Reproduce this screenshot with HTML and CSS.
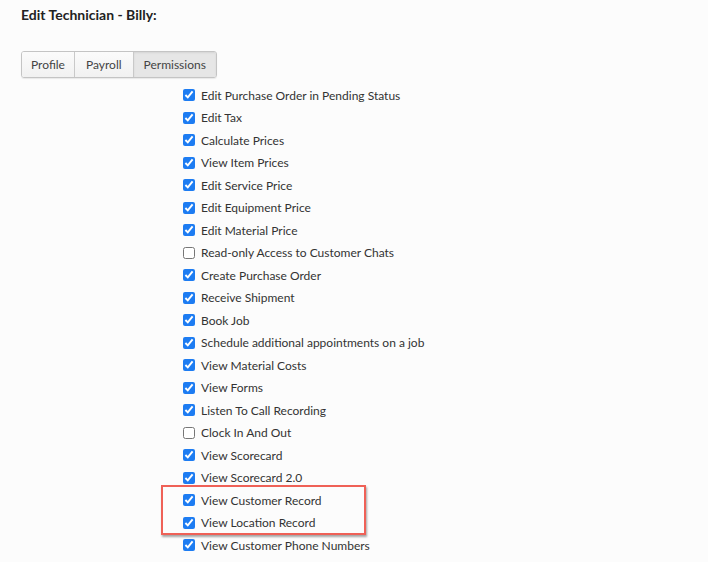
FILE: index.html
```html
<!DOCTYPE html>
<html lang="en">
<head>
<meta charset="utf-8">
<title>Edit Technician - Billy</title>
<link rel="stylesheet" href="styles.css">
</head>
<body>
<div class="page">
  <h1 class="title">Edit Technician - Billy:</h1>
  <div class="tabs">
    <button class="tab">Profile</button>
    <button class="tab">Payroll</button>
    <button class="tab active">Permissions</button>
  </div>
  <div class="perms">
    <label class="row"><input type="checkbox" checked><span>Edit Purchase Order in Pending Status</span></label>
    <label class="row"><input type="checkbox" checked><span>Edit Tax</span></label>
    <label class="row"><input type="checkbox" checked><span>Calculate Prices</span></label>
    <label class="row"><input type="checkbox" checked><span>View Item Prices</span></label>
    <label class="row"><input type="checkbox" checked><span>Edit Service Price</span></label>
    <label class="row"><input type="checkbox" checked><span>Edit Equipment Price</span></label>
    <label class="row"><input type="checkbox" checked><span>Edit Material Price</span></label>
    <label class="row"><input type="checkbox"><span>Read-only Access to Customer Chats</span></label>
    <label class="row"><input type="checkbox" checked><span>Create Purchase Order</span></label>
    <label class="row"><input type="checkbox" checked><span>Receive Shipment</span></label>
    <label class="row"><input type="checkbox" checked><span>Book Job</span></label>
    <label class="row"><input type="checkbox" checked><span>Schedule additional appointments on a job</span></label>
    <label class="row"><input type="checkbox" checked><span>View Material Costs</span></label>
    <label class="row"><input type="checkbox" checked><span>View Forms</span></label>
    <label class="row"><input type="checkbox" checked><span>Listen To Call Recording</span></label>
    <label class="row"><input type="checkbox"><span>Clock In And Out</span></label>
    <label class="row"><input type="checkbox" checked><span>View Scorecard</span></label>
    <label class="row"><input type="checkbox" checked><span>View Scorecard 2.0</span></label>
    <label class="row"><input type="checkbox" checked><span>View Customer Record</span></label>
    <label class="row"><input type="checkbox" checked><span>View Location Record</span></label>
    <label class="row"><input type="checkbox" checked><span>View Customer Phone Numbers</span></label>
    <div class="highlight"></div>
  </div>
</div>
</body>
</html>
```
FILE: styles.css
```css
html, body {
  margin: 0;
  padding: 0;
  background: #fcfcfc;
}
body {
  font-family: Lato, "Open Sans", "Liberation Sans", sans-serif;
  color: #333;
  height: 562px;
  overflow: hidden;
}
.page {
  padding: 6px 0 0 21px;
}
.title {
  margin: 0;
  font-size: 14px;
  line-height: 18px;
  font-weight: 700;
  color: #222;
}
.tabs {
  display: inline-flex;
  margin-top: 27px;
  border: 1px solid #c4c4c4;
  border-radius: 3px;
  box-shadow: 0 1px 1px rgba(0,0,0,0.08);
  overflow: hidden;
}
.tab {
  font-family: inherit;
  font-size: 12px;
  color: #444;
  height: 25px;
  padding: 0 11px;
  margin: 0;
  border: 0;
  border-left: 1px solid #c9c9c9;
  background: linear-gradient(#fbfbfb, #f1f1f1);
}
.tab:first-child {
  border-left: 0;
  padding: 0 9px;
}
.tab.active {
  padding: 0 10px;
  background: #e6e6e6;
  box-shadow: inset 0 1px 2px rgba(0,0,0,0.08);
}
.perms {
  position: relative;
  margin: 6px 0 0 162px;
}
.row {
  display: flex;
  align-items: center;
  gap: 6px;
  height: 22.5px;
  font-size: 12px;
  color: #333;
}
.row input {
  width: 12px;
  height: 12px;
  margin: 0;
  accent-color: #1d7cf2;
}
.highlight {
  position: absolute;
  left: -22px;
  top: 401px;
  width: 201px;
  height: 46px;
  border: 2px solid #ef6157;
  box-shadow: 1px 2px 2px rgba(0,0,0,0.35);
  pointer-events: none;
}
```
